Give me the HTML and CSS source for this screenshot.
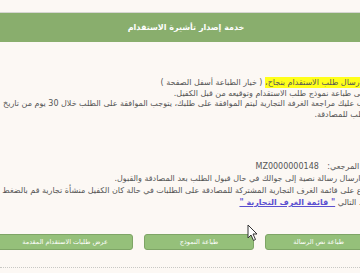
FILE: index.html
```html
<!DOCTYPE html>
<html lang="ar">
<head>
  <meta charset="UTF-8" />
  <meta name="viewport" content="width=device-width, initial-scale=1.0" />
  <title>خدمة إصدار تأشيرة الاستقدام</title>
  <link rel="stylesheet" href="styles.css">
</head>
<body>
  <div class="page">
    <header class="title-bar">
      <h1>خدمة إصدار تأشيرة الاستقدام</h1>
    </header>

    <div class="message">
      <p><mark>تم إرسال طلب الاستقدام بنجاح،</mark> ( خيار الطباعة أسفل الصفحة )</p>
      <p>يرجى طباعة نموذج طلب الاستقدام وتوقيعه من قبل الكفيل.</p>
      <p>يجب عليك مراجعة الغرفة التجارية ليتم الموافقة على طلبك، يتوجب الموافقة على الطلب خلال 30 يوم من تاريخ<br>الطلب للمصادقة.</p>
    </div>

    <div class="details">
      <p>الرقم المرجعي: <span class="ref">MZ0000000148</span></p>
      <p>سيتم ارسال رسالة نصية إلى جوالك في حال قبول الطلب بعد المصادقة والقبول.</p>
      <p>للاطلاع على قائمة الغرف التجارية المشتركة للمصادقة على الطلبات في حالة كان الكفيل منشأة تجارية قم بالضغط على<br>الرابط التالي <a href="#">" قائمة الغرف التجارية "</a></p>
    </div>

    <div class="actions">
      <button class="btn btn-msg">طباعة نص الرسالة</button>
      <button class="btn btn-form">طباعة النموذج</button>
      <button class="btn btn-list">عرض طلبات الاستقدام المقدمة</button>
    </div>

    <div class="bottom-line"></div>
  </div>

  <svg class="cursor" width="12" height="18" viewBox="0 0 12 18">
    <path d="M1 1 L1 14 L4 11 L6.5 16.5 L8.5 15.5 L6 10 L10 10 Z" fill="#fff" stroke="#333" stroke-width="1"/>
  </svg>
</body>
</html>
```

FILE: styles.css
```css
:root {
  --page-bg: #fcf8f4;
  --green: #89ae6d;
  --btn-green: #95c07a;
  --btn-border: #7ea566;
  --text-color: #555;
}

html, body {
  margin: 0;
  padding: 0;
  background: var(--page-bg);
  overflow: hidden;
}

body {
  font-family: 'DejaVu Sans', Tahoma, sans-serif;
  color: var(--text-color);
}

.page {
  width: 372px;
  padding-top: 12px;
  direction: rtl;
  text-align: right;
}

.title-bar {
  background: var(--green);
  border-top: 1px solid #d6d6d2;
  height: 29px;
  display: flex;
  align-items: center;
  justify-content: center;
}

.title-bar h1 {
  margin: 0;
  font-size: 8px;
  font-weight: bold;
  color: #fff;
}

.message p,
.details p {
  margin: 0;
  white-space: nowrap;
}

.message {
  padding-top: 36px;
  font-size: 8px;
  line-height: 10.5px;
}

mark {
  background: #ffff1a;
  color: var(--text-color);
  padding: 1px 0;
}

.details {
  margin-right: -8px;
  padding-top: 41px;
  font-size: 8px;
  line-height: 12px;
}

.ref {
  margin-right: 6px;
}

.details a {
  color: #5b4fd0;
  font-weight: bold;
}

.actions {
  display: flex;
  gap: 11px;
  padding-top: 25px;
}

.btn {
  flex: none;
  height: 16px;
  padding: 0;
  background: var(--btn-green);
  border: 1px solid var(--btn-border);
  border-radius: 3px;
  color: #fff;
  font-family: 'DejaVu Sans', Tahoma, sans-serif;
  font-size: 6.5px;
}

.btn-msg {
  width: 107px;
}

.btn-form {
  width: 110px;
}

.btn-list {
  width: 136px;
}

.bottom-line {
  margin-top: 17px;
  border-top: 1px dotted #c8c8c4;
}

.cursor {
  position: absolute;
  left: 247px;
  top: 224px;
}
```
